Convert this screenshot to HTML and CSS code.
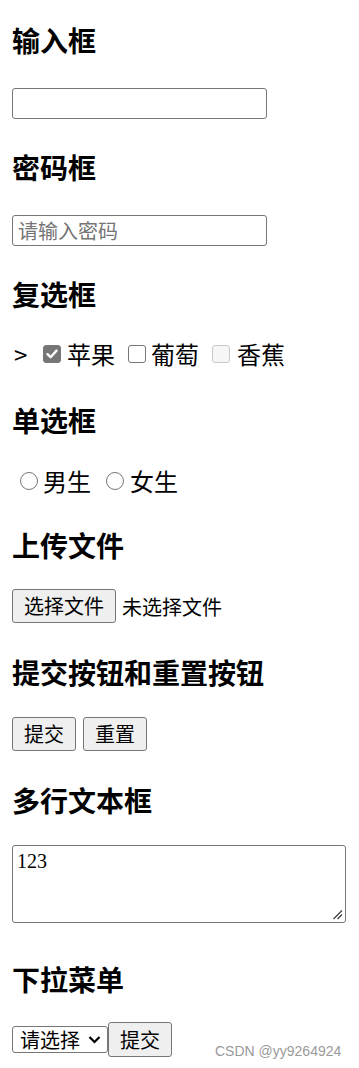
FILE: index.html
```html
<!DOCTYPE html>
<html lang="zh-CN">
<head>
<meta charset="utf-8">
<title>表单</title>
<link rel="stylesheet" href="styles.css">
</head>
<body>
<form class="page">
  <h3 class="title t-first">输入框</h3>
  <input class="text-input" type="text">

  <h3 class="title">密码框</h3>
  <input class="text-input" type="password" placeholder="请输入密码">

  <h3 class="title">复选框</h3>
  <div class="row check-row">
    <span class="gt">&gt;</span>
    <span class="box checked c1"><svg viewBox="0 0 18 18" width="18" height="18"><path d="M4.5 9.2 L7.6 12.2 L13.5 5.6" fill="none" stroke="#fff" stroke-width="2.4" stroke-linecap="round" stroke-linejoin="round"/></svg></span>
    <span class="lbl l1">苹果</span>
    <span class="box c2"></span>
    <span class="lbl l2">葡萄</span>
    <span class="box disabled c3"></span>
    <span class="lbl l3">香蕉</span>
  </div>

  <h3 class="title t-radio">单选框</h3>
  <div class="row radio-row">
    <span class="radio r1"></span>
    <span class="lbl rl1">男生</span>
    <span class="radio r2"></span>
    <span class="lbl rl2">女生</span>
  </div>

  <h3 class="title t-file">上传文件</h3>
  <div class="row file-row">
    <button type="button" class="btn file-btn">选择文件</button>
    <span class="file-text">未选择文件</span>
  </div>

  <h3 class="title t-btn">提交按钮和重置按钮</h3>
  <div class="row btn-row">
    <button type="submit" class="btn">提交</button>
    <button type="reset" class="btn reset">重置</button>
  </div>

  <h3 class="title t-area">多行文本框</h3>
  <div class="area">
    <span class="area-text">123</span>
    <svg class="grip" width="12" height="12" viewBox="0 0 12 12"><path d="M11 2.5 L2.5 11 M11 6.5 L6.5 11" stroke="#444" stroke-width="1.3" fill="none"/></svg>
  </div>

  <h3 class="title t-select">下拉菜单</h3>
  <div class="row select-row">
    <div class="select">
      <span>请选择</span>
      <svg width="13" height="9" viewBox="0 0 13 9"><path d="M1.5 2 L6.5 7 L11.5 2" fill="none" stroke="#000" stroke-width="2.2"/></svg>
    </div>
    <button type="button" class="btn">提交</button>
  </div>
</form>
<div class="watermark">CSDN @yy9264924</div>
</body>
</html>
```

FILE: styles.css
```css
html, body {
  margin: 0;
  padding: 0;
  background: #fff;
}
body {
  position: relative;
  width: 359px;
  min-height: 1068px;
  font-family: "Noto Sans CJK SC", "Noto Sans", sans-serif;
  color: #000;
}
.page {
  padding: 24px 12px 0;
  display: flex;
  flex-direction: column;
  align-items: flex-start;
}
.title {
  margin: 32px 0 0;
  font-size: 28px;
  line-height: 32px;
  font-weight: 700;
}
.t-first { margin-top: 0; }
.text-input {
  box-sizing: border-box;
  margin: 32px 0 0;
  width: 255px;
  height: 31px;
  border: 1px solid #767676;
  border-radius: 3px;
  padding: 0 5px;
  font-family: "Noto Sans CJK SC", sans-serif;
  font-size: 20px;
  background: #fff;
}
.text-input::placeholder { color: #757575; }
.row {
  display: flex;
  align-items: center;
}
.check-row {
  margin-top: 29px;
  height: 30px;
  font-size: 24px;
  line-height: 30px;
}
.gt { width: 24px; padding-left: 2px; box-sizing: border-box; }
.box {
  box-sizing: border-box;
  width: 18px;
  height: 18px;
  border: 1.5px solid #767676;
  border-radius: 3px;
  background: #fff;
  display: flex;
}
.box.checked { background: #767676; border-color: #767676; }
.box.checked svg { margin: -1.5px; }
.box.disabled { border-color: #c9c9c9; background: #f6f6f6; }
.c1 { margin-left: 7px; }
.l1 { margin-left: 6px; }
.c2 { margin-left: 13px; }
.l2 { margin-left: 5px; }
.c3 { margin-left: 13px; }
.l3 { margin-left: 7px; }
.t-radio { margin-top: 35px; }
.radio-row {
  margin-top: 30px;
  height: 30px;
  font-size: 24px;
  line-height: 30px;
}
.radio {
  box-sizing: border-box;
  width: 18px;
  height: 18px;
  border: 1.5px solid #767676;
  border-radius: 50%;
  background: #fff;
}
.r1 { margin-left: 8px; }
.rl1 { margin-left: 5px; }
.r2 { margin-left: 15px; }
.rl2 { margin-left: 6px; }
.t-file { margin-top: 33px; }
.btn {
  box-sizing: border-box;
  height: 34px;
  padding: 0 11px;
  border: 1.5px solid #767676;
  border-radius: 3px;
  background: #efefef;
  font-family: "Noto Sans CJK SC", sans-serif;
  font-size: 20px;
  line-height: 1;
  color: #000;
  margin: 0;
}
.file-row { margin-top: 28px; }
.file-btn { width: 104px; padding: 0; }
.file-text { margin-left: 6px; font-size: 20px; }
.t-btn { margin-top: 33px; }
.btn-row { margin-top: 29px; }
.btn-row .btn { width: 64px; padding: 0; }
.reset { margin-left: 7px; }
.t-area { margin-top: 33px; }
.area {
  position: relative;
  box-sizing: border-box;
  margin-top: 29px;
  width: 334px;
  height: 78px;
  border: 1.5px solid #767676;
  border-radius: 3px;
  padding: 3px 4px;
}
.area-text {
  font-family: "Liberation Serif", serif;
  font-size: 20px;
  line-height: 24px;
}
.grip {
  position: absolute;
  right: 2px;
  bottom: 2px;
}
.t-select { margin-top: 40px; }
.select-row { margin-top: 27px; }
.select {
  box-sizing: border-box;
  width: 96px;
  height: 27px;
  border: 1.5px solid #767676;
  border-radius: 3px;
  display: flex;
  align-items: center;
  padding: 0 6px 0 7px;
  justify-content: space-between;
  font-size: 20px;
  line-height: 1;
  background: #fff;
}
.select-row .btn { width: 64px; height: 35px; padding: 0; }
.watermark {
  position: absolute;
  left: 215px;
  top: 1043px;
  font-family: "Liberation Sans", Arial, sans-serif;
  font-size: 14px;
  line-height: 16px;
  color: #9a9a9a;
}
```
